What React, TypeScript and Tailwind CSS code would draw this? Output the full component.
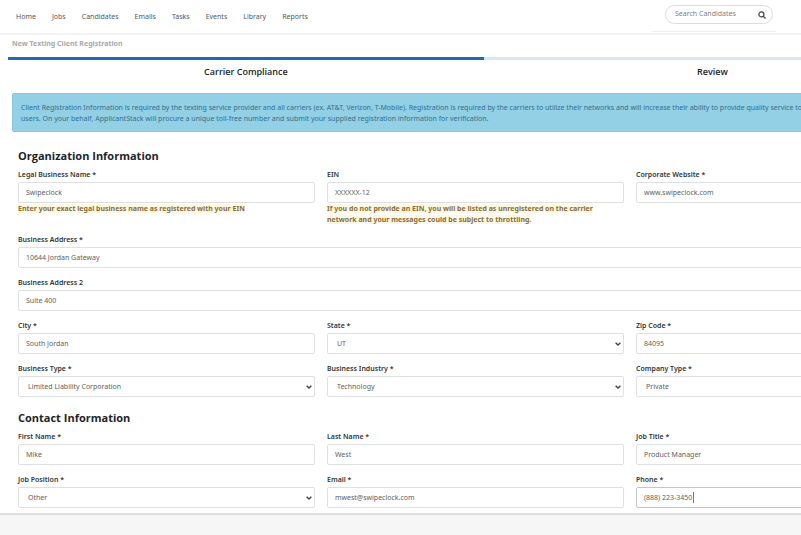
import clsx from "clsx";
import { InputHTMLAttributes, SelectHTMLAttributes, ReactNode } from "react";

const navItems = [
    "Home",
    "Jobs",
    "Candidates",
    "Emails",
    "Tasks",
    "Events",
    "Library",
    "Reports",
];

const controlClass =
    "block h-[21px] w-full rounded-[2px] border bg-white text-[7px] text-[#5c5f62] outline-none";

interface FieldProps {
    id: string;
    label: string;
    help?: string;
    className?: string;
    children: ReactNode;
}

function Field({ id, label, help, className, children }: FieldProps) {
    return (
        <div className={className}>
            <label
                htmlFor={id}
                className="block text-[7px] leading-[14px] font-semibold text-[#303538]"
            >
                {label}
            </label>
            {children}
            {help && (
                <p className="text-[7px] leading-[11px] font-bold text-[#8a6d3b]">
                    <span className="bg-[#fcf8e3]">{help}</span>
                </p>
            )}
        </div>
    );
}

function TextInput({
    focused,
    ...props
}: InputHTMLAttributes<HTMLInputElement> & { focused?: boolean }) {
    return (
        <div className="relative">
            <input
                type="text"
                className={clsx(
                    controlClass,
                    "px-[7px]",
                    focused ? "border-[#c4c6c8]" : "border-[#dee0e2]"
                )}
                {...props}
            />
            {/* Caret */}
            {focused && (
                <span className="absolute top-[5px] left-[57px] h-[11px] w-px bg-[#777]" />
            )}
        </div>
    );
}

function Select({
    options,
    ...props
}: SelectHTMLAttributes<HTMLSelectElement> & { options: string[] }) {
    return (
        <div className="relative">
            <select
                className={clsx(
                    controlClass,
                    "appearance-none border-[#dee0e2] px-[9px] pt-0.5"
                )}
                {...props}
            >
                {options.map((option) => (
                    <option key={option}>{option}</option>
                ))}
            </select>
            <svg
                viewBox="0 0 6 4"
                className="pointer-events-none absolute top-[9px] right-[3px] h-1 w-1.5"
                fill="none"
                stroke="#444"
                strokeWidth="1.4"
            >
                <path d="M0.6 0.7 L3 3 L5.4 0.7" />
            </svg>
        </div>
    );
}

export default function App() {
    return (
        <div className="min-h-screen overflow-hidden bg-[#f6f6f6] font-['Noto_Sans','Open_Sans',sans-serif]">
            {/* Header */}
            <header className="flex h-[35px] justify-between border-b-2 border-[#f3f3f3] bg-white">
                <nav className="flex items-center gap-4 pl-4">
                    {navItems.map((item) => (
                        <a
                            key={item}
                            href="#"
                            className="text-[7px] leading-[12px] text-[#55585c]"
                        >
                            {item}
                        </a>
                    ))}
                </nav>
                <form className="mr-[25px] h-8 w-[124px] border-b border-[#eee] pt-[5px] pr-[3px] pl-[13px]">
                    <div className="flex h-[19px] items-center rounded-full border border-[#dcdcdc] pr-[6px] pl-[9px]">
                        <input
                            type="text"
                            aria-label="Search Candidates"
                            placeholder="Search Candidates"
                            className="w-0 flex-1 text-[7px] text-[#555] outline-none placeholder:text-[#808080]"
                        />
                        <button type="button" aria-label="Search">
                            <svg
                                viewBox="0 0 8 8"
                                className="size-2"
                                fill="none"
                                stroke="#444"
                                strokeWidth="1.2"
                            >
                                <circle cx="3.4" cy="3.4" r="2.5" />
                                <path d="M5.2 5.2 L7.5 7.5" />
                            </svg>
                        </button>
                    </div>
                </form>
            </header>

            <main className="min-w-[949px] border-b-2 border-[#dfdfdf] bg-white pt-[3px] pb-[5px]">
                <h1 className="pl-3 text-[7px] leading-[12px] font-bold text-[#a8a8a8]">
                    New Texting Client Registration
                </h1>

                {/* Steps */}
                <ol className="mt-[7px] grid grid-cols-[51%_49%] px-2 text-center font-['Open_Sans',sans-serif] text-[9px] leading-[12px] font-semibold text-[#222529]">
                    <li className="border-t-3 border-[#1f6ab0] pt-[6px]">
                        Carrier Compliance
                    </li>
                    <li className="border-t-3 border-[#d8e8f0] pt-[6px]">
                        Review
                    </li>
                </ol>

                <div className="mx-3 mt-[15px] rounded-[2px] border border-[#86c9e0] bg-[#93cfe5] px-2 pt-2 pb-[7px] text-[7px] leading-[11px] text-[#31708f]">
                    Client Registration Information is required by the texting
                    service provider and all carriers (ex. AT&amp;T, Verizon,
                    T-Mobile). Registration is required by the carriers to
                    utilize their networks and will increase their ability to
                    provide quality service to
                    <br />
                    users. On your behalf, ApplicantStack will procure a unique
                    toll-free number and submit your supplied registration
                    information for verification.
                </div>

                <form className="pr-4 pl-[18px]">
                    {/* Organization */}
                    <h2 className="mt-4 mb-1 font-['Open_Sans',sans-serif] text-[11px] leading-[16px] font-bold text-[#212529]">
                        Organization Information
                    </h2>
                    <div className="grid grid-cols-3 gap-x-3 gap-y-2">
                        <Field
                            id="legalName"
                            label="Legal Business Name *"
                            help="Enter your exact legal business name as registered with your EIN"
                        >
                            <TextInput id="legalName" defaultValue="Swipeclock" />
                        </Field>
                        <Field
                            id="ein"
                            label="EIN"
                            help="If you do not provide an EIN, you will be listed as unregistered on the carrier network and your messages could be subject to throttling."
                        >
                            <TextInput id="ein" defaultValue="XXXXXX-12" />
                        </Field>
                        <Field id="website" label="Corporate Website *">
                            <TextInput
                                id="website"
                                defaultValue="www.swipeclock.com"
                            />
                        </Field>
                        <Field
                            id="address"
                            label="Business Address *"
                            className="col-span-3"
                        >
                            <TextInput
                                id="address"
                                defaultValue="10644 Jordan Gateway"
                            />
                        </Field>
                        <Field
                            id="address2"
                            label="Business Address 2"
                            className="col-span-3"
                        >
                            <TextInput id="address2" defaultValue="Suite 400" />
                        </Field>
                        <Field id="city" label="City *">
                            <TextInput id="city" defaultValue="South Jordan" />
                        </Field>
                        <Field id="state" label="State *">
                            <Select id="state" options={["UT"]} />
                        </Field>
                        <Field id="zip" label="Zip Code *">
                            <TextInput id="zip" defaultValue="84095" />
                        </Field>
                        <Field id="businessType" label="Business Type *">
                            <Select
                                id="businessType"
                                options={["Limited Liability Corporation"]}
                            />
                        </Field>
                        <Field id="industry" label="Business Industry *">
                            <Select id="industry" options={["Technology"]} />
                        </Field>
                        <Field id="companyType" label="Company Type *">
                            <Select id="companyType" options={["Private"]} />
                        </Field>
                    </div>

                    {/* Contact */}
                    <h2 className="mt-[13px] mb-1 font-['Open_Sans',sans-serif] text-[11px] leading-[16px] font-bold text-[#212529]">
                        Contact Information
                    </h2>
                    <div className="grid grid-cols-3 gap-x-3 gap-y-2">
                        <Field id="firstName" label="First Name *">
                            <TextInput id="firstName" defaultValue="Mike" />
                        </Field>
                        <Field id="lastName" label="Last Name *">
                            <TextInput id="lastName" defaultValue="West" />
                        </Field>
                        <Field id="jobTitle" label="Job Title *">
                            <TextInput
                                id="jobTitle"
                                defaultValue="Product Manager"
                            />
                        </Field>
                        <Field id="jobPosition" label="Job Position *">
                            <Select id="jobPosition" options={["Other"]} />
                        </Field>
                        <Field id="email" label="Email *">
                            <TextInput
                                id="email"
                                defaultValue="mwest@swipeclock.com"
                            />
                        </Field>
                        <Field id="phone" label="Phone *">
                            <TextInput
                                id="phone"
                                defaultValue="(888) 223-3450"
                                focused
                            />
                        </Field>
                    </div>
                </form>
            </main>
        </div>
    );
}
